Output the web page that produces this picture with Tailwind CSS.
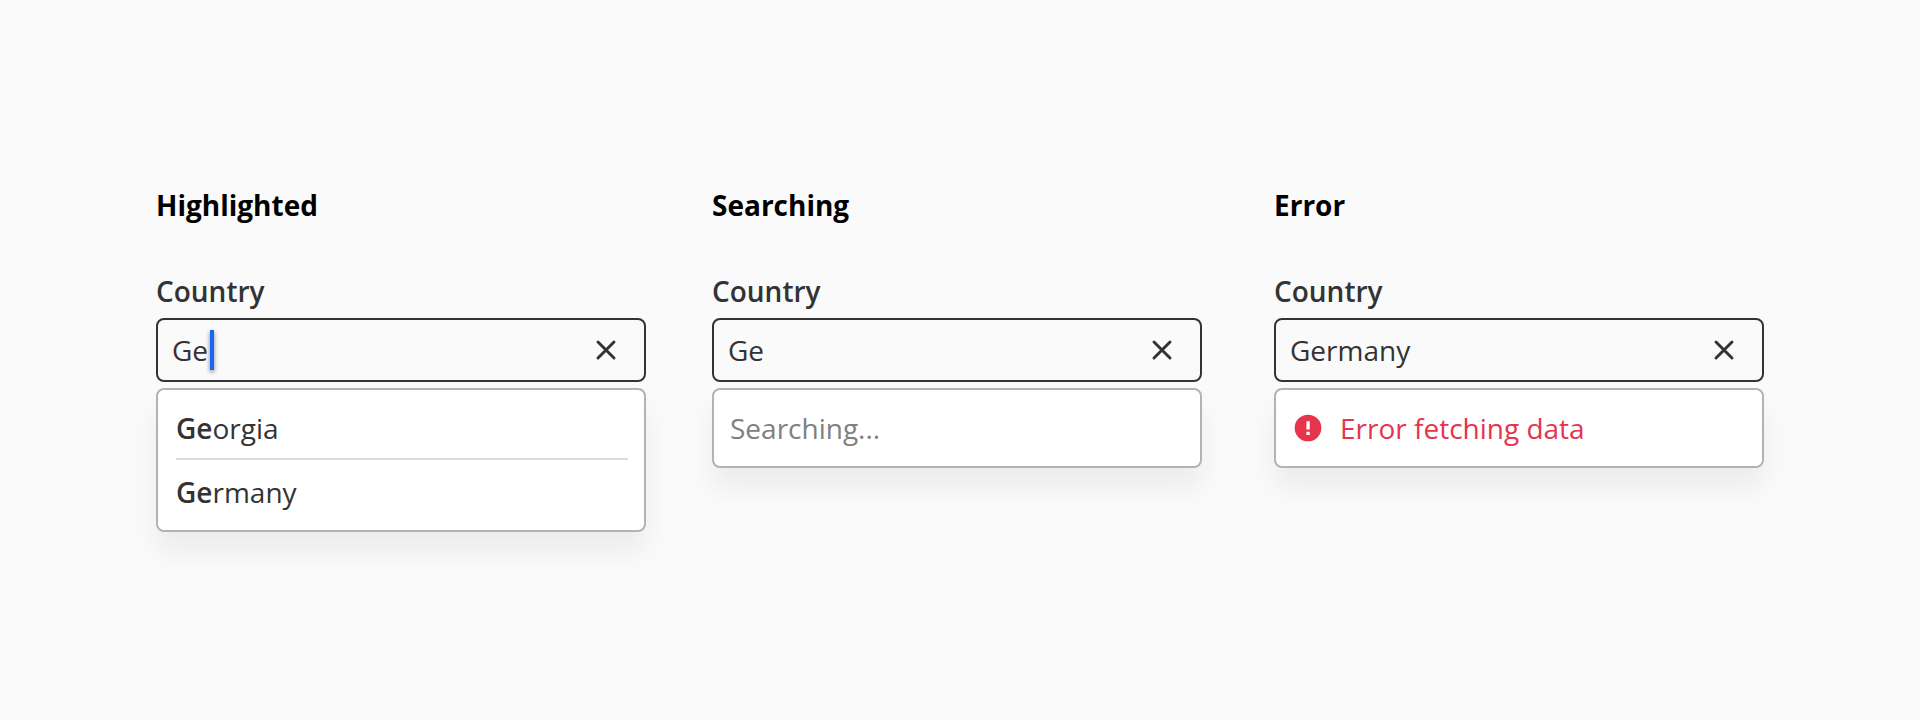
<!DOCTYPE html>
<html lang="en">
<head>
<meta charset="utf-8">
<title>Autocomplete states</title>
<script src="https://cdn.jsdelivr.net/npm/@tailwindcss/browser@4"></script>
</head>
<body class="bg-[#fafafa] font-['Open_Sans','Noto_Sans',sans-serif] text-[28px] leading-[40px] text-[#333333] antialiased">
<main class="flex h-[720px] w-[1920px] items-start overflow-hidden pt-[185px] pl-[156px]">
  <section class="mr-[66px] w-[490px]">
    <h2 class="font-bold text-black">Highlighted</h2>
    <div class="mt-[46px] mb-[7px] font-semibold">Country</div>
    <div class="flex h-16 items-center justify-between rounded-lg border-2 border-[#333333] pr-[22px] pl-[14px]">
      <div class="flex items-center"><span class="w-9">Ge</span><span class="ml-[2px] h-10 w-1 bg-[#1866f5] shadow-[0_2px_4px_rgba(0,0,0,0.5)]"></span></div>
      <svg class="size-8" viewBox="0 0 24 24" fill="none" stroke="#333333" stroke-width="2.2" stroke-linecap="round"><path d="M6 6 18 18M18 6 6 18"/></svg>
    </div>
    <ul class="mt-1.5 rounded-lg border-2 border-[#b3b3b3] bg-white py-[18px] pr-4 pl-[18px] shadow-[0_20px_28px_rgba(0,0,0,0.06)]">
      <li class="border-b-2 border-[#dcdcdc] pb-[10px]"><span class="font-semibold">Ge</span>orgia</li>
      <li class="pt-3"><span class="font-semibold">Ge</span>rmany</li>
    </ul>
  </section>
  <section class="mr-[72px] w-[490px]">
    <h2 class="font-bold text-black">Searching</h2>
    <div class="mt-[46px] mb-[7px] font-semibold">Country</div>
    <div class="flex h-16 items-center justify-between rounded-lg border-2 border-[#333333] pr-[22px] pl-[14px]">
      <span>Ge</span>
      <svg class="size-8" viewBox="0 0 24 24" fill="none" stroke="#333333" stroke-width="2.2" stroke-linecap="round"><path d="M6 6 18 18M18 6 6 18"/></svg>
    </div>
    <div class="mt-1.5 rounded-lg border-2 border-[#b3b3b3] bg-white px-4 py-[18px] text-[#808080] shadow-[0_20px_28px_rgba(0,0,0,0.06)]">Searching...</div>
  </section>
  <section class="w-[490px]">
    <h2 class="font-bold text-black">Error</h2>
    <div class="mt-[46px] mb-[7px] font-semibold">Country</div>
    <div class="flex h-16 items-center justify-between rounded-lg border-2 border-[#333333] pr-[22px] pl-[14px]">
      <span>Germany</span>
      <svg class="size-8" viewBox="0 0 24 24" fill="none" stroke="#333333" stroke-width="2.2" stroke-linecap="round"><path d="M6 6 18 18M18 6 6 18"/></svg>
    </div>
    <div class="mt-1.5 flex items-center gap-4 rounded-lg border-2 border-[#b3b3b3] bg-white px-4 py-[18px] text-[#e5344c] shadow-[0_20px_28px_rgba(0,0,0,0.06)]">
      <svg class="size-8" viewBox="0 0 24 24"><circle cx="12" cy="12" r="10" fill="#e5344c"/><path fill="#fff" d="M10.8 6.900h2.500v6.200h-2.500zM10.8 14.900h2.500v2.300h-2.500z"/></svg>
      <span>Error fetching data</span>
    </div>
  </section>
</main>
</body>
</html>
